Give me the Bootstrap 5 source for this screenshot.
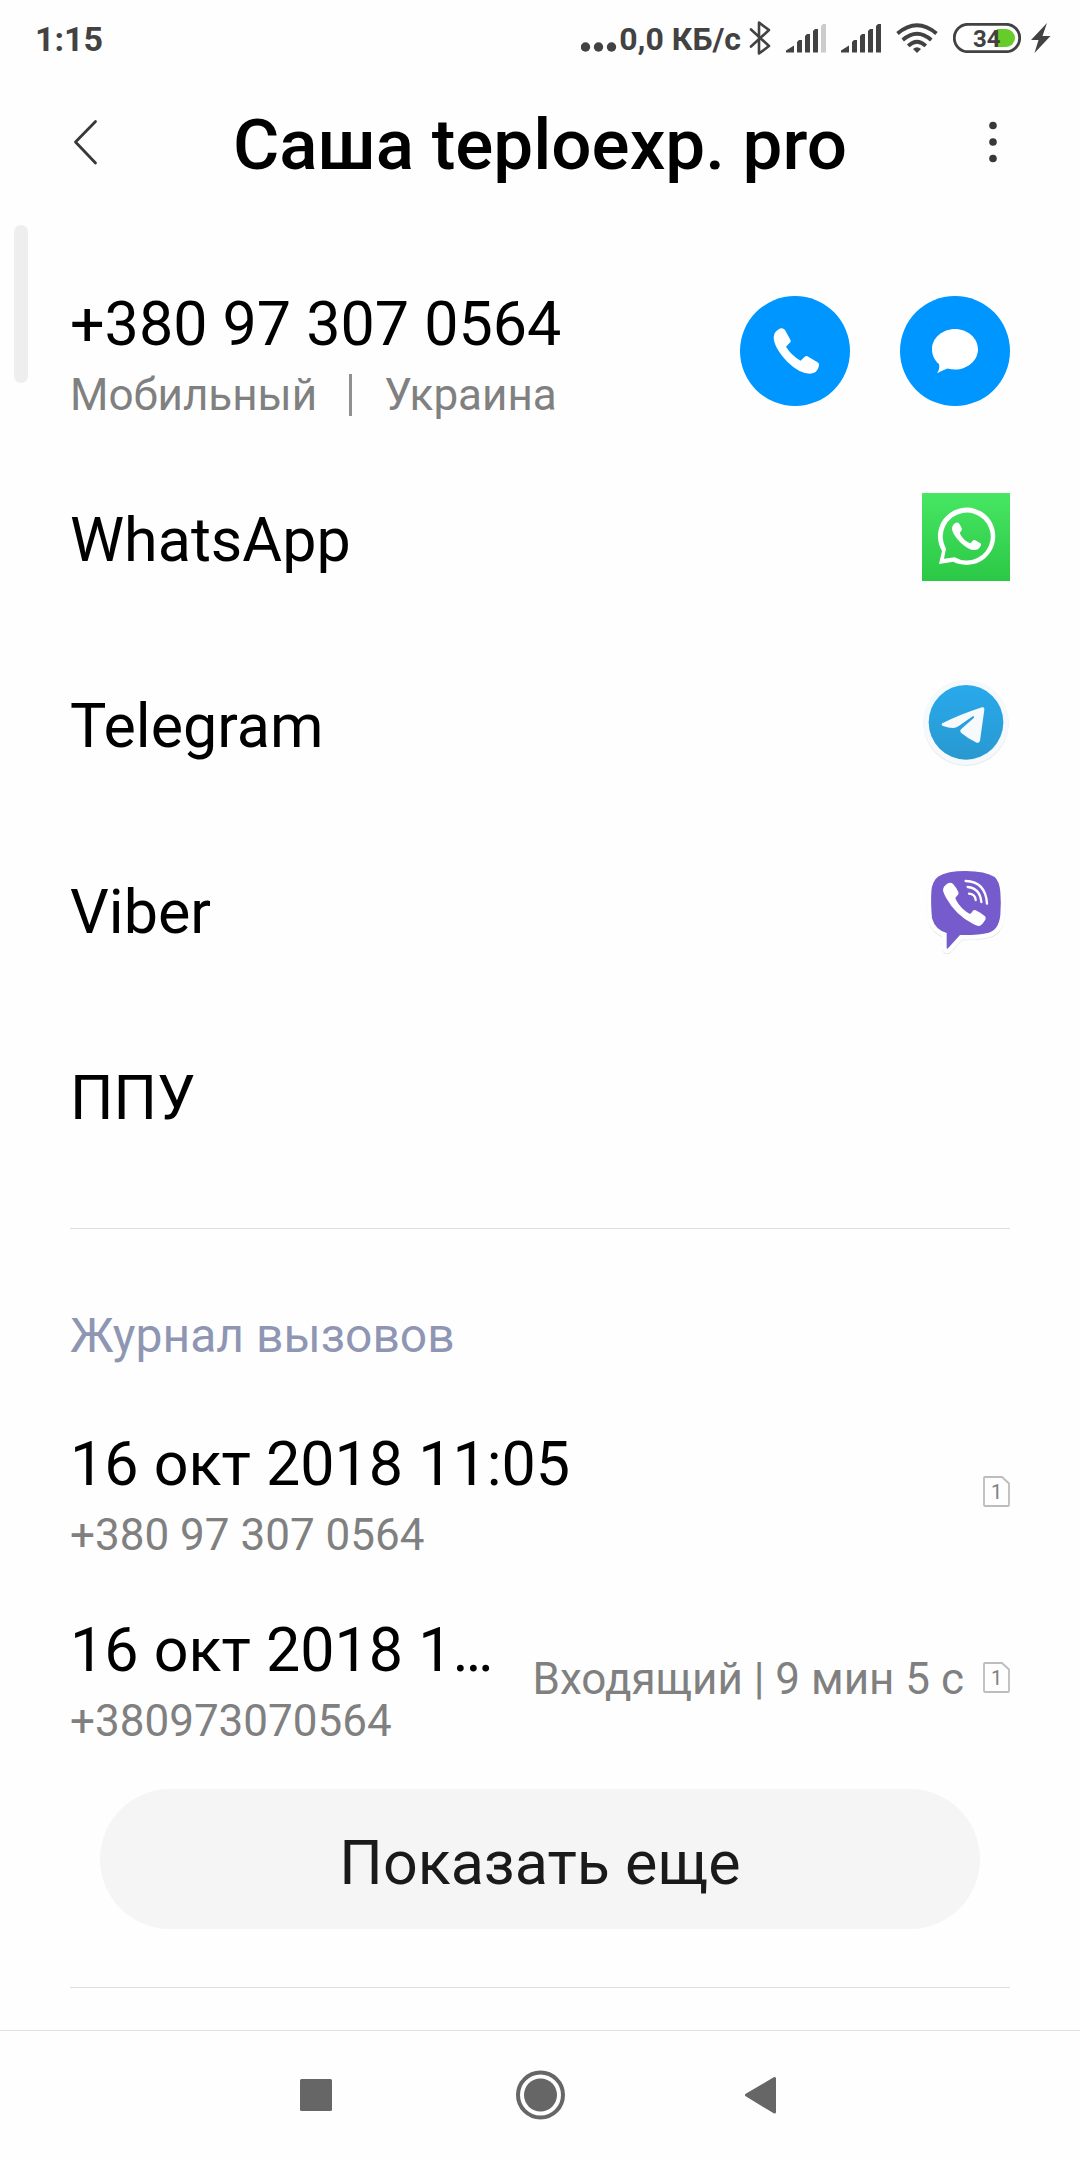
<!DOCTYPE html>
<html lang="ru">
<head>
<meta charset="utf-8">
<meta name="viewport" content="width=device-width, initial-scale=1">
<title>Саша teploexp. pro</title>
<link href="https://cdn.jsdelivr.net/npm/bootstrap@5.3.0/dist/css/bootstrap.min.css" rel="stylesheet">
<style>
  body { font-family: Roboto, "Noto Sans", sans-serif; background: #fefefe; color: #000; }
  svg { display: block; flex: none; }
  .status-bar { height: 80px; padding: 0 29px 4px 35px; color: #424242; font-weight: 700; line-height: 40px; }
  .clock { font-size: 34px; padding-top: 2px; }
  .net-speed { font-size: 32px; padding-top: 2px; }
  .status-icons { gap: 15px; }
  .gap-small { gap: 10px; }
  .title-bar { height: 124px; padding: 0 70px; }
  .title-bar h1 { font-size: 71px; font-weight: 500; line-height: 84px; padding-top: 6px; }
  .tool-btn { width: 48px; height: 64px; padding: 0; border: 0; background: none; flex: none; }
  .content-area { position: relative; padding: 54px 70px 41px; }
  .scroll-thumb { position: absolute; left: 14px; top: 21px; width: 14px; height: 158px; border-radius: 7px; background: #eee; }
  .item-row { min-height: 186px; color: #000; text-decoration: none; }
  .primary-line { font-size: 61px; line-height: 72px; }
  .secondary-line { font-size: 44px; line-height: 70px; color: #808080; }
  .one-line { padding-top: 6px; }
  .two-lines { padding-top: 16px; }
  .sep-bar { width: 3px; height: 42px; margin: 0 32px; background: #909090; }
  .round-btn { width: 110px; height: 110px; padding: 0; border: 0; border-radius: 50%; background: #0096ff; }
  .round-gap { gap: 50px; }
  .section-line { margin: 0; border: 0; border-top: 1px solid #dedede; opacity: 1; }
  .section-title { font-size: 48px; line-height: 56px; font-weight: 400; color: #8f96b3; margin: 79px 0 34px; }
  .space-above { margin-top: 40px; }
  .call-info { gap: 19px; margin-left: 36px; }
  .call-note { padding-top: 4px; }
  .more-btn { height: 140px; margin: 19px 30px 58px; padding: 8px 0 0; border-radius: 70px; background: #f5f5f5; color: #1a1a1a; font-size: 61px; line-height: 72px; border: 0; }
  .sys-nav { height: 130px; padding-bottom: 1px; border-top: 1px solid #e0e0e0; gap: 175px; }
  .sys-nav button { padding: 0; border: 0; background: none; width: 50px; height: 50px; }
</style>
</head>
<body class="d-flex flex-column min-vh-100">

<div class="status-bar d-flex align-items-center justify-content-between">
  <span class="clock">1:15</span>
  <div class="d-flex align-items-center status-icons">
    <div class="d-flex align-items-center">
      <svg width="38" height="40" viewBox="0 0 38 40" fill="#424242"><circle cx="4.500" cy="29" r="4.700"/><circle cx="17.500" cy="29" r="4.700"/><circle cx="30.500" cy="29" r="4.700"/></svg>
      <span class="net-speed">0,0 КБ/с</span>
      <svg class="ms-2" width="22" height="36" viewBox="0 0 22 36" fill="none" stroke="#424242" stroke-width="2.600" stroke-linejoin="round" stroke-linecap="round"><path d="M2 9.500 20 26 10 33.500V2.500L20 10 2 26.500"/></svg>
    </div>
    <svg width="40" height="30" viewBox="0 0 40 30" fill="#424242"><path d="M0 29.500V27.500L8 22.500V29.500ZM11 29.500V19L13 17H16V29.500ZM19 29.500V13L21 11H24V29.500ZM27 29.500V8L29 6H32V29.500Z"/><path fill="#ccc" d="M35 29.500V3L37 1H40V29.500Z"/></svg>
    <svg width="40" height="30" viewBox="0 0 40 30" fill="#424242"><path d="M0 29.500V27.500L8 22.500V29.500ZM11 29.500V19L13 17H16V29.500ZM19 29.500V13L21 11H24V29.500ZM27 29.500V8L29 6H32V29.500ZM35 29.500V3L37 1H40V29.500Z"/></svg>
    <svg width="42" height="30" viewBox="0 0 42 30"><g fill="none" stroke="#424242" stroke-width="3.800"><path d="M1.500 10.500Q21-6 40.500 10.500M6.700 17Q21 4.500 35.300 17M12.200 22.800Q21 14.500 29.800 22.800"/></g><path d="M17 26Q21 22.500 25 26L21 30Z" fill="#424242"/></svg>
    <div class="d-flex align-items-center gap-small">
      <svg width="68" height="30" viewBox="0 0 68 30"><rect x="1.300" y="1.300" width="65.400" height="27.400" rx="13.700" fill="#fff" stroke="#424242" stroke-width="2.800"/><path d="M44 6H53A9 9 0 0 1 53 24H44Z" fill="#66cc29"/><text x="20" y="24" font-size="24" font-weight="700" fill="#424242">34</text></svg>
      <svg width="20" height="30" viewBox="0 0 20 30"><path d="M16 0 0 17H7.500L3.500 30 19.500 13H11.500Z" fill="#424242"/></svg>
    </div>
  </div>
</div>

<header class="title-bar d-flex align-items-center justify-content-between">
  <button class="tool-btn" type="button" aria-label="Назад"><svg width="48" height="64" viewBox="0 0 48 64"><path d="M25.500 11.500 5.500 32 25.500 53" fill="none" stroke="#383838" stroke-width="2.800" stroke-linecap="round" stroke-linejoin="round"/></svg></button>
  <h1 class="m-0 text-center">Саша teploexp. pro</h1>
  <button class="tool-btn" type="button" aria-label="Меню"><svg width="48" height="64" viewBox="0 0 48 64" fill="#383838"><circle cx="31" cy="15.500" r="3.800"/><circle cx="31" cy="32" r="3.800"/><circle cx="31" cy="48.500" r="3.800"/></svg></button>
</header>

<main class="content-area flex-grow-1 d-flex flex-column">
  <div class="scroll-thumb"></div>

  <div class="item-row d-flex align-items-center justify-content-between">
    <div class="two-lines">
      <div class="primary-line">+380 97 307 0564</div>
      <div class="secondary-line d-flex align-items-center"><span>Мобильный</span><span class="sep-bar"></span><span>Украина</span></div>
    </div>
    <div class="d-flex round-gap">
      <button class="round-btn" type="button" aria-label="Позвонить"><svg width="110" height="110" viewBox="0 0 110 110"><path fill="#fff" d="M40 32.500Q43 31.500 45 34L50.500 44Q51.200 45.500 50 46.500L46 50.700Q51 59 60.500 64.700L65 60.500Q66 59.600 67.500 60.200L77.500 66.200Q79.800 67.500 79 69.500Q77.500 77.500 70 77.700Q59 77.500 47 65.500Q33.500 51 33.700 41Q33.700 35.500 40 32.500Z"/></svg></button>
      <button class="round-btn" type="button" aria-label="Сообщение"><svg width="110" height="110" viewBox="0 0 110 110"><path fill="#fff" d="M55 33C67.500 33 78 42 78 53.200S67.500 73.500 55 73.500Q51 73.500 47.500 72.500Q42.500 74.500 37 77.300Q40 73.500 39 68C34.500 64.500 32 59 32 53.200C32 42 42.500 33 55 33Z"/></svg></button>
    </div>
  </div>

  <a href="#" class="item-row d-flex align-items-center justify-content-between">
    <span class="primary-line one-line">WhatsApp</span>
    <svg width="88" height="88" viewBox="0 0 264 264"><defs><linearGradient id="green" x2="0" y2="1"><stop stop-color="#47e663"/><stop offset="1" stop-color="#2bc846"/></linearGradient></defs><rect width="264" height="264" fill="url(#green)"/><path fill="#fff" fill-rule="evenodd" d="M60 174A86 86 0 1 1 94 206L51 213ZM72 167A72 72 0 1 1 98 193L66 197Z"/><path fill="#fff" d="M102 89Q110 87 113 94L119 106Q121 111 117 115Q112 119 114 122Q124 142 145 151Q149 148 152 143Q155 139 160 142L174 150Q178 152 177 156Q173 171 156 171Q140 171 116 149Q92 125 90 108Q90 94 102 89Z"/></svg>
  </a>

  <a href="#" class="item-row d-flex align-items-center justify-content-between">
    <span class="primary-line one-line">Telegram</span>
    <svg width="88" height="88" viewBox="0 0 264 264"><defs><linearGradient id="blue" x2="0" y2="1"><stop stop-color="#29a9ec"/><stop offset="1" stop-color="#2899d0"/></linearGradient></defs><circle cx="132" cy="133" r="128" fill="#e6eaed"/><circle cx="132" cy="130" r="128" fill="#f5f9fc"/><circle cx="132" cy="130" r="112" fill="url(#blue)"/><path fill="#f7fafc" d="M180 85Q188 83 187 92L174 185Q172 193 164 191Q140 180 117 161Q112 156 117 151L156 116Q158 111 152 112L109 142Q102 147 94 147Q80 147 61 140Q56 137 61 133Q110 108 180 85Z"/></svg>
  </a>

  <a href="#" class="item-row d-flex align-items-center justify-content-between">
    <span class="primary-line one-line">Viber</span>
    <svg width="88" height="88" viewBox="0 0 264 264" overflow="visible"><defs><path id="bubble" d="M131 18Q190 18 218 36Q232 48 235 80Q238 115 235 150Q230 195 200 203Q170 211 114 210L78 250Q74 253 74 248L74 204Q40 195 30 160Q26 115 28 80Q30 48 50 34Q75 18 131 18Z"/></defs><use href="#bubble" y="2" fill="none" stroke="#dcdcdc" stroke-width="28" stroke-linejoin="round"/><use href="#bubble" y="-1" fill="none" stroke="#fefefe" stroke-width="30" stroke-linejoin="round"/><use href="#bubble" fill="#765bcd"/><path fill="#fff" d="M78 55Q87 51 94 58Q103 68 109 81Q112 88 105 93Q98 97 101 103Q116 132 142 146Q147 148 150 141Q154 133 161 136Q176 143 189 154Q193 158 190 164Q178 183 170 183Q165 183 155 178Q100 149 74 101Q63 82 63 74Q64 64 78 55Z"/><g fill="none" stroke="#fff" stroke-width="7" stroke-linecap="round"><path d="M131 48Q191 50 195 116"/><path d="M137 66Q174 70 178 111"/><path d="M141 86Q160 88 161 105"/></g></svg>
  </a>

  <div class="item-row d-flex align-items-center">
    <span class="primary-line one-line">ППУ</span>
  </div>

  <hr class="section-line space-above">
  <h2 class="section-title">Журнал вызовов</h2>

  <div class="item-row d-flex align-items-center justify-content-between">
    <div class="two-lines">
      <div class="primary-line">16 окт 2018 11:05</div>
      <div class="secondary-line">+380 97 307 0564</div>
    </div>
    <svg width="27" height="31" viewBox="0 0 27 31"><path d="M1 2Q1 1 2 1H19L26 7.500V29Q26 30 25 30H2Q1 30 1 29Z" fill="none" stroke="#bdbdbd" stroke-width="1.800"/><text x="8" y="22.500" font-size="20" fill="#808080">1</text></svg>
  </div>

  <div class="item-row d-flex align-items-center justify-content-between">
    <div class="two-lines">
      <div class="primary-line text-nowrap">16 окт 2018 1…</div>
      <div class="secondary-line">+380973070564</div>
    </div>
    <div class="call-info d-flex align-items-center flex-shrink-0">
      <span class="secondary-line call-note">Входящий | 9 мин 5 с</span>
      <svg width="27" height="31" viewBox="0 0 27 31"><path d="M1 2Q1 1 2 1H19L26 7.500V29Q26 30 25 30H2Q1 30 1 29Z" fill="none" stroke="#bdbdbd" stroke-width="1.800"/><text x="8" y="22.500" font-size="20" fill="#808080">1</text></svg>
    </div>
  </div>

  <button type="button" class="btn more-btn">Показать еще</button>
  <hr class="section-line">
</main>

<nav class="sys-nav d-flex align-items-center justify-content-center">
  <button type="button" aria-label="Недавние"><svg width="50" height="50" viewBox="0 0 50 50"><rect x="10" y="9" width="32" height="32" rx="1.500" fill="#666"/></svg></button>
  <button type="button" aria-label="Домой"><svg width="50" height="50" viewBox="0 0 50 50"><circle cx="25.500" cy="25" r="22.500" fill="none" stroke="#666" stroke-width="4"/><circle cx="25.500" cy="25" r="16.500" fill="#666"/></svg></button>
  <button type="button" aria-label="Назад"><svg width="50" height="50" viewBox="0 0 50 50"><path d="M6.500 25 34.500 8.500V42Z" fill="#666" stroke="#666" stroke-width="3" stroke-linejoin="round"/></svg></button>
</nav>

<script src="https://cdn.jsdelivr.net/npm/bootstrap@5.3.0/dist/js/bootstrap.bundle.min.js"></script>
</body>
</html>
